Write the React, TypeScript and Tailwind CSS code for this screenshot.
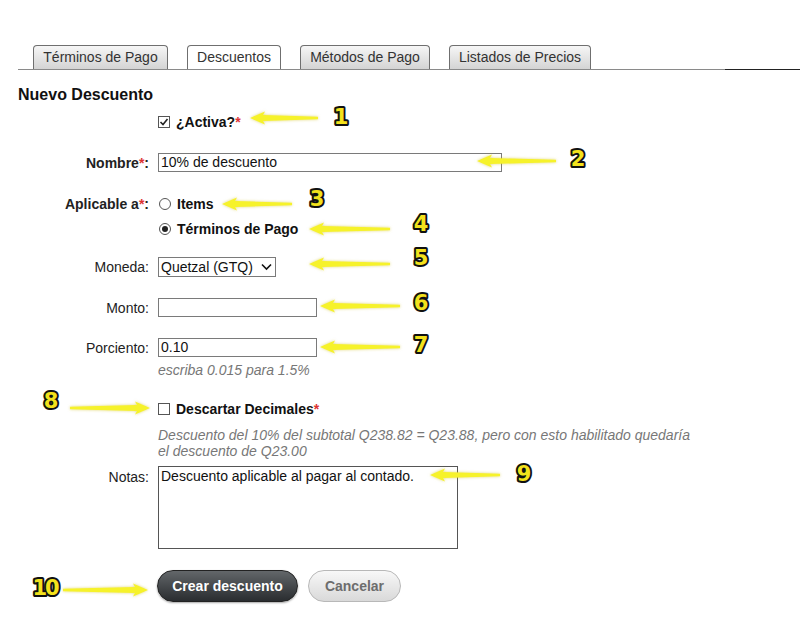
import React from "react";

const font = { fontFamily: '"Liberation Sans", Arial, sans-serif' };

type TabProps = { label: string; width: string; active?: boolean };

function Tab({ label, width, active }: TabProps) {
  return (
    <div
      className={`${width} h-[24px] flex items-center justify-center rounded-t-[4px] border border-b-0 border-[#6f6f6f] text-[14px] text-[#333] ${
        active ? "bg-white" : "bg-gradient-to-b from-[#f6f6f6] to-[#d4d4d4]"
      }`}
    >
      {label}
    </div>
  );
}

function Req() {
  return <span className="text-[#d33]">*</span>;
}

function Row({
  label,
  bold,
  mt,
  children,
  top,
}: {
  label?: React.ReactNode;
  bold?: boolean;
  mt: string;
  children: React.ReactNode;
  top?: boolean;
}) {
  return (
    <div className={`flex ${top ? "items-start" : "items-center"} ${mt}`}>
      <div
        className={`w-[150px] pr-[1px] text-right text-[14px] text-[#222] leading-[16px] ${
          bold ? "font-bold" : ""
        } ${top ? "pt-[3px]" : ""}`}
      >
        {label}
      </div>
      <div className="ml-[8px] flex-1">{children}</div>
    </div>
  );
}

function Checkbox({ checked }: { checked?: boolean }) {
  return (
    <span className="inline-flex w-[12px] h-[12px] border border-[#555] bg-white items-center justify-center">
      {checked && (
        <svg width="10" height="10" viewBox="0 0 10 10">
          <path d="M1.5 5 L4 7.5 L8.5 2" fill="none" stroke="#222" strokeWidth="1.6" />
        </svg>
      )}
    </span>
  );
}

function Radio({ checked }: { checked?: boolean }) {
  return (
    <span className="inline-flex w-[12px] h-[12px] rounded-full border border-[#555] bg-white items-center justify-center">
      {checked && <span className="w-[6px] h-[6px] rounded-full bg-[#222]" />}
    </span>
  );
}

const inputCls =
  "h-[19px] border border-[#7a7a7a] bg-white px-[2px] text-[14px] text-[#111] leading-[17px]";

type Ann = { n: string; tip: number; tail: number; y: number; nx: number; ny: number };

const anns: Ann[] = [
  { n: "1", tip: 250, tail: 318, y: 118, nx: 341, ny: 116 },
  { n: "2", tip: 477, tail: 556, y: 161, nx: 578, ny: 158 },
  { n: "3", tip: 222, tail: 292, y: 204, nx: 317, ny: 198 },
  { n: "4", tip: 309, tail: 390, y: 229, nx: 421, ny: 223 },
  { n: "5", tip: 309, tail: 390, y: 264, nx: 421, ny: 257 },
  { n: "6", tip: 320, tail: 400, y: 306, nx: 421, ny: 302 },
  { n: "7", tip: 320, tail: 400, y: 347, nx: 421, ny: 344 },
  { n: "8", tip: 150, tail: 70, y: 408, nx: 51, ny: 400 },
  { n: "9", tip: 430, tail: 500, y: 475, nx: 524, ny: 473 },
  { n: "10", tip: 148, tail: 63, y: 590, nx: 45, ny: 587 },
];

function arrowPath(tip: number, tail: number, y: number) {
  const d = tip < tail ? 1 : -1;
  const hl = 15;
  const hw = 6.5;
  const neck = tip + d * hl;
  return `M${tip} ${y} L${neck} ${y - hw} L${neck - d * 2} ${y - 3} L${tail} ${y - 1.2} L${tail} ${y + 1.2} L${neck - d * 2} ${y + 3} L${neck} ${y + hw} Z`;
}

function Annotations() {
  return (
    <svg className="absolute inset-0 pointer-events-none" width="800" height="635">
      <defs>
        <filter id="glow" x="-20%" y="-100%" width="140%" height="300%">
          <feGaussianBlur in="SourceAlpha" stdDeviation="1.8" result="b" />
          <feFlood floodColor="#c9b400" floodOpacity="0.55" />
          <feComposite in2="b" operator="in" />
          <feMerge>
            <feMergeNode />
            <feMergeNode in="SourceGraphic" />
          </feMerge>
        </filter>
      </defs>
      {anns.map((a) => (
        <g key={a.n}>
          <path d={arrowPath(a.tip, a.tail, a.y)} fill="#f6f22a" filter="url(#glow)" />
          <text
            x={a.nx}
            y={a.ny + 8}
            textAnchor="middle"
            fontFamily='"DejaVu Sans", sans-serif'
            fontWeight="bold"
            fontSize="21"
            fill="#f3e21c"
            stroke="#111"
            strokeWidth="4"
            strokeLinejoin="round"
            paintOrder="stroke"
            letterSpacing={a.n === "10" ? "-2" : "0"}
          >
            {a.n}
          </text>
        </g>
      ))}
    </svg>
  );
}

export default function App() {
  return (
    <div className="relative w-[800px] h-[635px] bg-white overflow-hidden" style={font}>
      <div className="pt-[45px] flex">
        <div className="ml-[18px] w-[707px] border-b border-[#8a8a8a] flex gap-[19px] pl-[15px]">
          <Tab label="Términos de Pago" width="w-[135px]" />
          <Tab label="Descuentos" width="w-[94px]" active />
          <Tab label="Métodos de Pago" width="w-[130px]" />
          <Tab label="Listados de Precios" width="w-[142px]" />
        </div>
        <div className="flex-1 border-b border-[#222]" />
      </div>

      <div className="ml-[18px] mt-[16px] text-[16px] font-bold text-[#111] leading-[18px]">
        Nuevo Descuento
      </div>

      <div className="text-[14px] text-[#222]">
        <Row mt="mt-[9px]">
          <div className="flex items-center gap-[6px] h-[18px]">
            <Checkbox checked />
            <span className="font-bold text-[#111]">
              ¿Activa?<Req />
            </span>
          </div>
        </Row>

        <Row
          mt="mt-[22px]"
          bold
          label={
            <>
              Nombre<Req />:
            </>
          }
        >
          <div className={`${inputCls} w-[344px]`}>10% de descuento</div>
        </Row>

        <Row
          mt="mt-[23px]"
          bold
          label={
            <>
              Aplicable a<Req />:
            </>
          }
        >
          <div className="flex items-center gap-[6px] h-[18px] pl-[1px]">
            <Radio />
            <span className="font-bold text-[#111]">Items</span>
          </div>
        </Row>
        <Row mt="mt-[7px]">
          <div className="flex items-center gap-[6px] h-[18px] pl-[1px]">
            <Radio checked />
            <span className="font-bold text-[#111]">Términos de Pago</span>
          </div>
        </Row>

        <Row mt="mt-[19px]" label="Moneda:">
          <div className="w-[118px] h-[20px] border border-[#7a7a7a] bg-white flex items-center justify-between pl-[2px] pr-[3px] text-[14px] text-[#111]">
            <span>Quetzal (GTQ)</span>
            <svg width="11" height="8" viewBox="0 0 11 8">
              <path d="M1 1.5 L5.5 6 L10 1.5" fill="none" stroke="#111" strokeWidth="1.6" />
            </svg>
          </div>
        </Row>

        <Row mt="mt-[21px]" label="Monto:">
          <div className={`${inputCls} w-[159px]`} />
        </Row>

        <Row mt="mt-[21px]" label="Porciento:">
          <div className={`${inputCls} w-[159px]`}>0.10</div>
        </Row>
        <Row mt="mt-[5px]">
          <div className="italic text-[#777] leading-[16px]">escriba 0.015 para 1.5%</div>
        </Row>

        <Row mt="mt-[22px]">
          <div className="flex items-center gap-[6px] h-[18px]">
            <Checkbox />
            <span className="font-bold text-[#111]">
              Descartar Decimales<Req />
            </span>
          </div>
        </Row>
        <Row mt="mt-[9px]">
          <div className="italic text-[#777] leading-[16px] w-[540px]">
            Descuento del 10% del subtotal Q238.82 = Q23.88, pero con esto habilitado quedaría el
            descuento de Q23.00
          </div>
        </Row>

        <Row mt="mt-[7px]" label="Notas:" top>
          <div className="w-[300px] h-[83px] border border-[#555] bg-white px-[2px] pt-[1px] text-[14px] text-[#111] leading-[16px]">
            Descuento aplicable al pagar al contado.
          </div>
        </Row>

        <Row mt="mt-[21px]">
          <div className="flex items-center gap-[10px] -ml-[1px]">
            <button className="w-[141px] h-[32px] rounded-full border border-[#222] bg-gradient-to-b from-[#63676a] to-[#2a2d30] text-white font-bold text-[14px] shadow-[0_1px_2px_rgba(0,0,0,0.35)]">
              Crear descuento
            </button>
            <button className="w-[93px] h-[32px] rounded-full border border-[#b8b8b8] bg-gradient-to-b from-[#f8f8f8] to-[#d9d9d9] text-[#6d6d6d] font-bold text-[14px]">
              Cancelar
            </button>
          </div>
        </Row>
      </div>

      <Annotations />
    </div>
  );
}
